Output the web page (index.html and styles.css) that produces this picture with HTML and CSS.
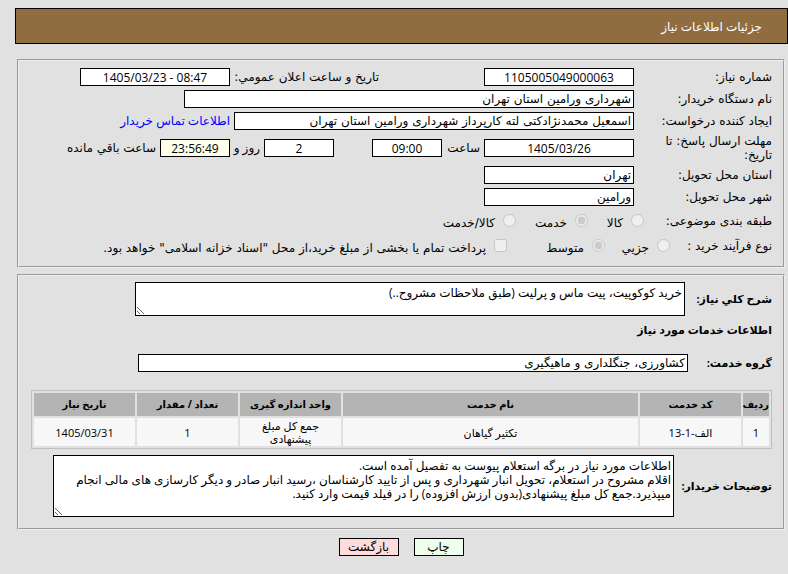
FILE: index.html
```
<!DOCTYPE html>
<html lang="fa" dir="rtl">
<head>
    <meta charset="UTF-8">
    <title>جزئیات اطلاعات نیاز</title>
    <link rel="stylesheet" href="styles.css">
</head>
<body>
    <header class="page-title">جزئیات اطلاعات نیاز</header>

    <main>
        <fieldset class="panel">
            <div class="form-row">
                <label class="row-label" for="need-number">شماره نیاز:</label>
                <input type="text" id="need-number" class="field medium number" value="1105005049000063" readonly>
                <label class="announce-label" for="announce-date">تاریخ و ساعت اعلان عمومي:</label>
                <input type="text" id="announce-date" class="field medium number" value="1405/03/23 - 08:47" dir="ltr" readonly>
            </div>
            <div class="form-row">
                <label class="row-label" for="buyer">نام دستگاه خریدار:</label>
                <input type="text" id="buyer" class="field long" value="شهرداری ورامین استان تهران" readonly>
            </div>
            <div class="form-row">
                <label class="row-label" for="requester">ایجاد کننده درخواست:</label>
                <input type="text" id="requester" class="field wide" value="اسمعیل محمدنژادکتی لته کارپرداز شهرداری ورامین استان تهران" readonly>
                <a href="#" class="contact-link">اطلاعات تماس خریدار</a>
            </div>
            <div class="form-row deadline">
                <label class="row-label" for="deadline-date"><span class="label-text">مهلت ارسال پاسخ: تا تاریخ:</span></label>
                <input type="text" id="deadline-date" class="field medium number" value="1405/03/26" readonly>
                <label class="hour-label" for="deadline-hour">ساعت</label>
                <input type="text" id="deadline-hour" class="field short number" value="09:00" readonly>
                <input type="text" id="days-left" class="field short number days" value="2" readonly>
                <label class="day-label" for="days-left">روز و</label>
                <input type="text" id="time-left" class="field short number timer" value="23:56:49" readonly>
                <label class="left-label" for="time-left">ساعت باقي مانده</label>
            </div>
            <div class="form-row">
                <label class="row-label" for="province">استان محل تحویل:</label>
                <input type="text" id="province" class="field medium" value="تهران" readonly>
            </div>
            <div class="form-row">
                <label class="row-label" for="city">شهر محل تحویل:</label>
                <input type="text" id="city" class="field medium" value="ورامین" readonly>
            </div>
            <div class="form-row options">
                <span class="subject-label">طبقه بندی موضوعی:</span>
                <label class="option goods"><input type="radio" name="subject" disabled><span>کالا</span></label>
                <label class="option service"><input type="radio" name="subject" checked disabled><span>خدمت</span></label>
                <label class="option"><input type="radio" name="subject" disabled><span>کالا/خدمت</span></label>
            </div>
            <div class="form-row options">
                <span class="process-label">نوع فرآیند خرید :</span>
                <label class="option partial"><input type="radio" name="process" disabled><span>جزیي</span></label>
                <label class="option average"><input type="radio" name="process" checked disabled><span>متوسط</span></label>
                <label class="option"><input type="checkbox" disabled><span>پرداخت تمام یا بخشی از مبلغ خرید،از محل "اسناد خزانه اسلامی" خواهد بود.</span></label>
            </div>
        </fieldset>

        <fieldset class="panel details">
            <div class="summary">
                <label class="bold summary-label" for="summary">شرح کلي نیاز:</label>
                <textarea id="summary" class="summary-text" readonly>خرید کوکوپیت، پیت ماس و پرلیت (طبق ملاحظات مشروح..)</textarea>
            </div>
            <h2>اطلاعات خدمات مورد نیاز</h2>
            <div class="group">
                <label class="bold group-label" for="group">گروه خدمت:</label>
                <input type="text" id="group" class="field group-field" value="کشاورزی، جنگلداری و ماهیگیری" readonly>
            </div>
            <table class="services">
                <thead>
                    <tr>
                        <th class="col-row">ردیف</th>
                        <th class="col">کد خدمت</th>
                        <th>نام خدمت</th>
                        <th class="col">واحد اندازه گیری</th>
                        <th class="col">تعداد / مقدار</th>
                        <th class="col">تاریخ نیاز</th>
                    </tr>
                </thead>
                <tbody>
                    <tr>
                        <td>1</td>
                        <td>الف-1-13</td>
                        <td>تکثیر گیاهان</td>
                        <td>جمع کل مبلغ پیشنهادی</td>
                        <td>1</td>
                        <td>1405/03/31</td>
                    </tr>
                </tbody>
            </table>
            <div class="comments">
                <label class="bold comments-label" for="comments">توضیحات خریدار:</label>
                <textarea id="comments" class="comments-text" readonly>اطلاعات مورد نیاز در برگه استعلام پیوست به تفصیل آمده است.
اقلام مشروح در استعلام، تحویل انبار شهرداری و پس از تایید کارشناسان ،رسید انبار صادر و دیگر کارسازی های مالی انجام میپذیرد.جمع کل مبلغ پیشنهادی(بدون ارزش افزوده) را در فیلد قیمت وارد کنید.</textarea>
            </div>
        </fieldset>

        <div class="actions">
            <button type="button" class="btn print">چاپ</button>
            <button type="button" class="btn back">بازگشت</button>
        </div>
    </main>
</body>
</html>
```
FILE: styles.css
```
* {
    box-sizing: border-box;
}

body {
    margin: 8px 0 0 15px;
    background-color: #e1e1e1;
    color: #000;
    font-family: "DejaVu Sans", Tahoma, sans-serif;
    font-size: 12px;
    line-height: 14px;
}

input, textarea, button {
    font: inherit;
    color: inherit;
}

.page-title, .number, .contact-link, .day-label, .bold, h2, .services, textarea {
    font-family: "Open Sans", "DejaVu Sans", Tahoma, sans-serif;
}

.page-title {
    height: 36px;
    padding: 0 25px;
    border: 1px solid #000;
    background-color: #8f6d41;
    color: #fff;
    line-height: 36px;
}

main {
    margin: 15px 3px 0 2px;
}

.panel {
    margin: 0 0 6px;
    padding: 5px 11px 8px 12px;
    border: 2px groove #efefef;
    min-width: 0;
}

.form-row {
    display: flex;
    align-items: center;
    height: 22px;
    white-space: nowrap;
}

.row-label {
    flex: none;
    width: 138px;
}

.field {
    flex: none;
    height: 18px;
    padding: 0 2px;
    border: 1px solid #000;
    background-color: #fff;
}

.number {
    text-align: center;
}

.short {
    width: 70px;
}

.medium {
    width: 150px;
}

.wide {
    width: 400px;
}

.long {
    width: 450px;
}

.announce-label {
    width: 149px;
    margin-right: 105px;
}

.contact-link {
    margin-right: 4px;
    color: #00f;
    text-decoration: none;
}

.deadline {
    height: 32px;
}

.label-text {
    display: block;
    width: 112px;
    white-space: normal;
}

.hour-label {
    width: 38px;
    margin-right: 4px;
}

.days {
    margin-right: 38px;
}

.day-label {
    width: 30px;
    margin-right: 4px;
}

.left-label {
    margin-right: 4px;
}

.timer {
    background-color: #ffffec;
}

.options {
    height: 25px;
}

.subject-label {
    width: 128px;
}

.process-label {
    width: 102px;
}

.option {
    display: flex;
    align-items: center;
    gap: 8px;
}

.option input {
    width: 13px;
    height: 13px;
    margin: 0;
}

.option span {
    padding-top: 4px;
}

.goods {
    width: 56px;
}

.service {
    width: 72px;
}

.partial {
    width: 65px;
}

.average {
    width: 98px;
}

.details {
    padding: 6px 11px 11px 12px;
}

.bold, h2 {
    font-size: 11px;
    font-weight: bold;
}

.summary, .group, .comments {
    display: flex;
    align-items: center;
    gap: 4px;
    white-space: nowrap;
}

textarea {
    flex: none;
    padding: 3px 2px;
    border: 1px solid #000;
    background-color: #fff;
    overflow: hidden;
}

.summary-label {
    width: 83px;
}

.summary-text {
    width: 550px;
    height: 34px;
}

h2 {
    margin: 7px 0 17px;
}

.group-label {
    width: 80px;
}

.group-field {
    width: 550px;
}

.services {
    width: 100%;
    margin: 18px 0 6px;
    border: 1px solid #c0c0c0;
    border-spacing: 2px;
    table-layout: fixed;
    font-size: 11px;
    line-height: 13px;
    text-align: center;
}

.services th {
    height: 23px;
    padding: 0;
    background-color: #b4b4b4;
    font-size: 10px;
}

.services td {
    height: 28px;
    padding: 0 15px;
    background-color: #f7f7f7;
}

.services td:first-child {
    padding: 0;
}

.col-row {
    width: 26px;
}

.col {
    width: 101px;
}

.comments-label {
    width: 94px;
}

.comments-text {
    width: 621px;
    height: 62px;
}

.actions {
    display: flex;
    justify-content: center;
    gap: 15px;
    padding-top: 2px;
}

.btn {
    height: 18px;
    padding: 0;
    border: 1px solid #000;
}

.print {
    width: 50px;
    background-color: #efe;
}

.back {
    width: 60px;
    background-color: #ffdcdc;
}
```
